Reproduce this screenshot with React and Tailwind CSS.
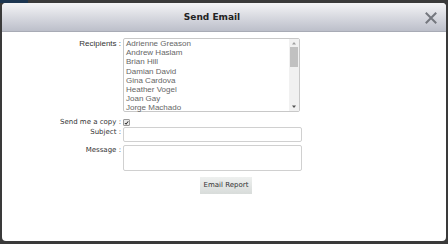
import React from "react";

const names = [
  "Adrienne Greason",
  "Andrew Haslam",
  "Brian Hill",
  "Damian David",
  "Gina Cardova",
  "Heather Vogel",
  "Joan Gay",
  "Jorge Machado",
];

export default function App() {
  return (
    <div className="w-[448px] h-[244px] bg-[#3a3a3a] relative overflow-hidden">
      <div className="absolute left-0 top-0 w-[28px] h-[3px] bg-[#1c3550]" />
      <div className="absolute left-[2px] right-[2px] top-[3px] bottom-[3px] rounded-[4px] bg-white flex flex-col overflow-hidden">
        <div className="relative h-[29px] shrink-0 bg-gradient-to-b from-[#f4f4f6] to-[#bcbfca] flex items-center justify-center pr-[24px] border-b border-[#a8abb5]">
          <span className="font-['DejaVu_Sans',sans-serif] font-bold text-[9px] text-[#222] pt-[1px]">Send Email</span>
          <svg className="absolute right-[9px] top-[9px]" width="12" height="12" viewBox="0 0 12 12">
            <path d="M1.5 1.5 L10.5 10.5 M10.5 1.5 L1.5 10.5" stroke="#74777e" strokeWidth="2" strokeLinecap="square" />
          </svg>
        </div>
        <div className="flex flex-col pt-[6px] text-[#333]">
          <div className="flex">
            <div className="w-[119px] shrink-0 text-right font-['Liberation_Sans',sans-serif] text-[8px] pt-[1px] leading-[9px] text-[#333]">Recipients :</div>
            <div className="ml-[2px] w-[177px] h-[74px] border border-[#c8c8c8] rounded-[2px] flex">
              <div className="flex-1 flex flex-col pl-[2px] font-['Liberation_Sans',sans-serif] text-[8px] leading-[9.2px] text-[#666]">
                {names.map((n) => (
                  <div key={n}>{n}</div>
                ))}
              </div>
              <div className="w-[10px] bg-[#f1f1f1] flex flex-col items-center">
                <svg width="10" height="8" viewBox="0 0 10 8"><path d="M3 5.5 L5 3 L7 5.5 Z" fill="#a0a0a0" /></svg>
                <div className="w-[8px] h-[20px] bg-[#c1c1c1]" />
                <div className="flex-1" />
                <svg width="10" height="8" viewBox="0 0 10 8"><path d="M3 2.5 L5 5 L7 2.5 Z" fill="#505050" /></svg>
              </div>
            </div>
          </div>
          <div className="flex mt-[6px] items-center h-[9px]">
            <div className="w-[119px] shrink-0 text-right font-['DejaVu_Sans',sans-serif] text-[7px] leading-[9px]">Send me a copy :</div>
            <div className="ml-[2px] w-[7px] h-[7px] bg-[#e8e8e8] border border-[#999] rounded-[1px] flex items-center justify-center">
              <svg width="6" height="6" viewBox="0 0 6 6"><path d="M1 3 L2.5 4.5 L5 1" stroke="#222" strokeWidth="1.2" fill="none" /></svg>
            </div>
          </div>
          <div className="flex">
            <div className="w-[119px] shrink-0 text-right font-['DejaVu_Sans',sans-serif] text-[7px] leading-[9px] pt-[1px]">Subject :</div>
            <div className="ml-[2px] w-[179px] h-[15px] border border-[#d0d0d0] rounded-[2px]" />
          </div>
          <div className="flex mt-[3px]">
            <div className="w-[119px] shrink-0 text-right font-['DejaVu_Sans',sans-serif] text-[7px] leading-[9px] pt-[1px]">Message :</div>
            <div className="ml-[2px] w-[179px] h-[26px] border border-[#d0d0d0] rounded-[2px]" />
          </div>
          <div className="flex justify-center mt-[6px] pl-[4px]">
            <div className="w-[52px] h-[17px] bg-gradient-to-b from-[#eef0ef] to-[#d8dcda] flex items-center justify-center font-['DejaVu_Sans',sans-serif] text-[7px] text-[#333]">Email Report</div>
          </div>
        </div>
      </div>
    </div>
  );
}
